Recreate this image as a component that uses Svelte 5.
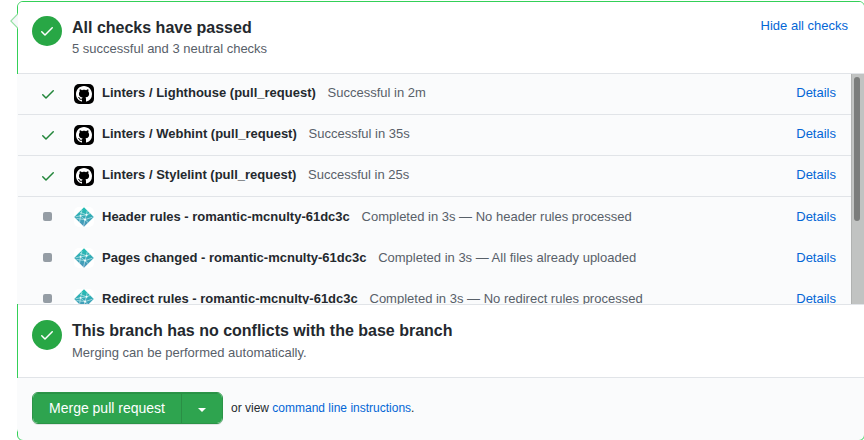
<script>
  const checks = [
    { name: 'Linters / Lighthouse (pull_request)', result: 'Successful in 2m', passed: true },
    { name: 'Linters / Webhint (pull_request)', result: 'Successful in 35s', passed: true },
    { name: 'Linters / Stylelint (pull_request)', result: 'Successful in 25s', passed: true },
    { name: 'Header rules - romantic-mcnulty-61dc3c', result: 'Completed in 3s — No header rules processed', passed: false },
    { name: 'Pages changed - romantic-mcnulty-61dc3c', result: 'Completed in 3s — All files already uploaded', passed: false },
    { name: 'Redirect rules - romantic-mcnulty-61dc3c', result: 'Completed in 3s — No redirect rules processed', passed: false }
  ];
</script>

{#snippet check()}
  <svg class="tick" viewBox="0 0 16 16" width="16" height="16" fill="currentColor">
    <path d="M13.78 4.22a.75.75 0 010 1.06l-7.25 7.25a.75.75 0 01-1.06 0L2.22 9.28a.75.75 0 011.06-1.06L6 10.94l6.72-6.72a.75.75 0 011.06 0z" />
  </svg>
{/snippet}

<main class="page">
  <section class="box">
    <svg class="caret" width="8" height="16" viewBox="0 0 8 16">
      <path d="M8 .7L.8 8 8 15.3" fill="#f6f8fa" stroke="#94e0a3" stroke-width="1.1" />
    </svg>

    <header class="summary">
      <span class="badge">{@render check()}</span>
      <div class="words">
        <h3>All checks have passed</h3>
        <p>5 successful and 3 neutral checks</p>
      </div>
      <a class="toggle" href="#checks">Hide all checks</a>
    </header>

    <div class="list">
      <div class="rows">
        {#each checks as item}
          <div class="row" class:neutral={!item.passed}>
            <span class="state">
              {#if item.passed}{@render check()}{:else}<i class="square"></i>{/if}
            </span>
            {#if item.passed}
              <span class="avatar github">
                <svg viewBox="0 0 16 16" width="16" height="16" fill="#fff">
                  <path d="M8 0C3.58 0 0 3.58 0 8c0 3.54 2.29 6.53 5.47 7.59.4.07.55-.17.55-.38 0-.19-.01-.82-.01-1.49-2.01.37-2.53-.49-2.69-.94-.09-.23-.48-.94-.82-1.13-.28-.15-.68-.52-.01-.53.63-.01 1.08.58 1.23.82.72 1.21 1.87.87 2.33.66.07-.52.28-.87.51-1.07-1.78-.2-3.64-.89-3.64-3.95 0-.87.31-1.59.82-2.15-.08-.2-.36-1.02.08-2.12 0 0 .67-.21 2.2.82.64-.18 1.32-.27 2-.27s1.36.09 2 .27c1.53-1.04 2.2-.82 2.2-.82.44 1.1.16 1.92.08 2.12.51.56.82 1.27.82 2.15 0 3.07-1.87 3.75-3.65 3.95.29.25.54.73.54 1.48 0 1.07-.01 1.93-.01 2.2 0 .21.15.46.55.38A8.01 8.01 0 0016 8c0-4.42-3.58-8-8-8z" />
                </svg>
              </span>
            {:else}
              <span class="avatar netlify">
                <svg viewBox="0 0 20 20" width="20" height="20">
                  <defs>
                    <linearGradient id="teal" x1="0" y1="0" x2="0" y2="1">
                      <stop offset="0" stop-color="#20c0b2" />
                      <stop offset="1" stop-color="#4d92bb" />
                    </linearGradient>
                  </defs>
                  <path d="M10 .2L19.8 10 10 19.8.2 10z" fill="url(#teal)" />
                  <path d="M5.8 5.2L12.5 7.8 16 6.5M12.5 7.8L13.2 3.6M12.5 7.8L11 12.6M6.5 9L11 12.6M1.5 9.8L6.5 8.8 12.5 7.8M2.5 11.5L11 12.6 18.5 10.2M11 12.6L9.6 19M11 12.6L14.2 15.6M5.6 15.2L6.5 8.8L8 3" fill="none" stroke="#d9f3f4" stroke-width=".6" />
                  <g fill="#eefafb"><circle cx="12.6" cy="7.8" r="1" /><circle cx="11" cy="12.6" r="1.1" /><circle cx="6.5" cy="8.8" r=".9" /></g>
                </svg>
              </span>
            {/if}
            <strong>{item.name}</strong>
            <span class="result">{item.result}</span>
            <a class="details" href="#details">Details</a>
          </div>
        {/each}
      </div>
      <div class="track"><div class="thumb"></div></div>
    </div>

    <div class="summary merge-state">
      <span class="badge">{@render check()}</span>
      <div class="words">
        <h3>This branch has no conflicts with the base branch</h3>
        <p>Merging can be performed automatically.</p>
      </div>
    </div>

    <footer>
      <div class="button-group">
        <button class="merge">Merge pull request</button>
        <button class="options" aria-label="Select merge method"><i></i></button>
      </div>
      <span class="alt">or view <a href="#cli">command line instructions</a>.</span>
    </footer>
  </section>
</main>

<style>
  :global(body) {
    background: #fff;
    overflow: hidden;
  }
  .page {
    height: 440px;
    overflow: hidden;
    padding: 1px 0 0 17px;
    box-sizing: border-box;
    font: 13px/20px "Liberation Sans", Arial, sans-serif;
    color: #24292e;
  }
  .box {
    position: relative;
    box-sizing: border-box;
    width: 848px;
    height: 440px;
    border: 1px solid #34d058;
    border-radius: 6px;
    background: #fafbfc;
  }
  .caret {
    position: absolute;
    left: -8px;
    top: 11px;
  }
  a {
    color: #0366d6;
    text-decoration: none;
  }
  .summary {
    display: flex;
    box-sizing: border-box;
    height: 72px;
    padding: 14px 16px 0 14px;
    background: #fff;
    border-bottom: 1px solid #e1e4e8;
    border-radius: 5px 5px 0 0;
  }
  .badge {
    display: flex;
    align-items: center;
    justify-content: center;
    width: 30px;
    height: 30px;
    border-radius: 50%;
    background: #28a745;
    color: #fff;
    flex: none;
  }
  .words {
    margin-left: 10px;
    flex: 1;
  }
  h3 {
    margin: 0;
    font-size: 16px;
    line-height: 24px;
    font-weight: 700;
  }
  p {
    margin: 0;
    line-height: 17px;
    color: #586069;
  }
  .toggle {
    line-height: 20px;
  }
  .list {
    display: flex;
    height: 230px;
    margin-left: -1px;
    overflow: hidden;
    background: #fafbfc;
  }
  .rows {
    width: 834px;
    padding-left: 1px;
    box-sizing: border-box;
    flex: none;
  }
  .row {
    display: flex;
    box-sizing: border-box;
    height: 41px;
    padding: 0 15px 0 21px;
    border-bottom: 1px solid #e1e4e8;
    line-height: 38px;
  }
  .row.neutral {
    border-bottom-color: transparent;
    line-height: 40px;
  }
  .state {
    display: flex;
    width: 17px;
    height: 40px;
    align-items: center;
    justify-content: center;
    color: #22863a;
  }
  .square {
    width: 9px;
    height: 9px;
    border-radius: 2px;
    background: #959da5;
  }
  .neutral .state {
    height: 39px;
  }
  .avatar {
    display: flex;
    align-items: center;
    justify-content: center;
    width: 20px;
    height: 20px;
    margin: 10px 8px 0 18px;
    border-radius: 5px;
    flex: none;
  }
  .github {
    background: #000;
  }
  .netlify {
    background: #fff;
  }
  .result {
    margin-left: 11.75px;
    color: #586069;
  }
  .details {
    margin-left: auto;
  }
  .track {
    box-sizing: border-box;
    width: 14px;
    flex: none;
    padding: 3px 0 0 2px;
    border-left: 1px solid #b0b2b1;
    background: #c1c3c2;
  }
  .thumb {
    width: 6px;
    height: 144px;
    border-radius: 3px;
    background: #7b7d7c;
  }
  .merge-state {
    height: 74px;
    padding-top: 15px;
    border-top: 1px solid #e1e4e8;
    border-radius: 0;
  }
  .merge-state .words {
    margin-top: -1px;
  }
  .merge-state p {
    line-height: 19px;
  }
  footer {
    display: flex;
    align-items: flex-start;
    height: 57px;
    margin-left: -1px;
    padding: 14px 0 0 15px;
    background: #fafbfc;
    box-sizing: border-box;
    border-radius: 0 0 6px 6px;
  }
  .button-group {
    display: flex;
    box-sizing: border-box;
    width: 191px;
    height: 32px;
    border: 1px solid #2b9447;
    border-radius: 6px;
    overflow: hidden;
    box-shadow: 0 1px 0 rgba(27, 31, 35, 0.1);
  }
  button {
    display: flex;
    align-items: center;
    justify-content: center;
    margin: 0;
    padding: 0;
    border: 0;
    background: #2ea44f;
    color: #fff;
    font: 14px/20px "Liberation Sans", Arial, sans-serif;
    box-shadow: inset 0 1px 0 rgba(20, 70, 32, 0.2);
  }
  .merge {
    width: 148px;
  }
  .options {
    flex: 1;
    border-left: 1px solid #2a8e45;
  }
  .options i {
    margin-top: 4px;
    border: 4px solid transparent;
    border-top-color: #fff;
    border-bottom: 0;
  }
  .alt {
    margin: 6px 0 0 8px;
    font-size: 12px;
  }
</style>
